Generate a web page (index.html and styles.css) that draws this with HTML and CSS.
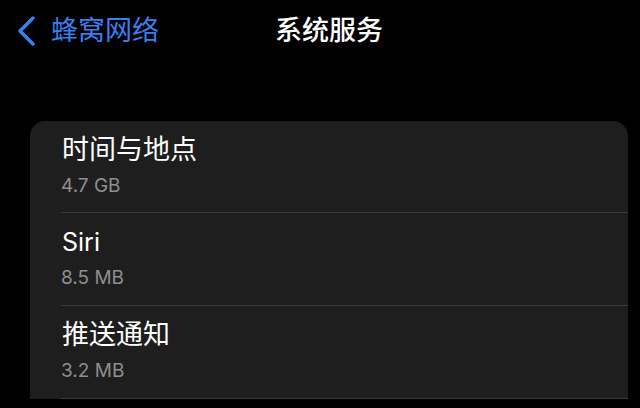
FILE: index.html
```html
<!DOCTYPE html>
<html lang="zh">
<head>
<meta charset="utf-8">
<link rel="stylesheet" href="styles.css">
</head>
<body>
<div class="nav">
  <div class="back">
    <svg class="chev" width="22" height="30" viewBox="0 0 22 30"><path d="M18 2 L5 15 L18 28" fill="none" stroke="#3a7ff0" stroke-width="3.4" stroke-linecap="round" stroke-linejoin="round"/></svg>
    <span class="back-label">蜂窝网络</span>
  </div>
  <div class="title">系统服务</div>
</div>
<div class="card">
  <div class="row"><div class="row-inner"><div class="name cjk">时间与地点</div><div class="size">4.7 GB</div></div></div>
  <div class="row"><div class="row-inner"><div class="name">Siri</div><div class="size">8.5 MB</div></div></div>
  <div class="row"><div class="row-inner"><div class="name cjk">推送通知</div><div class="size">3.2 MB</div></div></div>
</div>
</body>
</html>
```
FILE: styles.css
```css
html, body {
  margin: 0;
  padding: 0;
  background: #000;
  height: 100%;
  overflow: hidden;
}
body {
  font-family: "Inter", "Noto Sans CJK SC", sans-serif;
  color: #fff;
}
.nav {
  position: relative;
  height: 62px;
  display: flex;
  align-items: center;
}
.back {
  display: flex;
  align-items: center;
  padding-left: 15px;
  gap: 14px;
}
.chev { display: block; }
.back-label {
  color: #3a7ff0;
  font-size: 27px;
  line-height: 32px;
}
.title {
  position: absolute;
  left: 275px;
  top: 15px;
  font-size: 27px;
  line-height: 32px;
  font-weight: 500;
}
.card {
  margin: 59px 12px 0 30px;
  background: #1e1e1e;
  border-radius: 15px 15px 0 0;
}
.row {
  padding-left: 31px;
}
.row-inner {
  height: 92px;
  border-bottom: 1px solid #3a3a3c;
  box-sizing: border-box;
  padding-top: 13px;
}
.row + .row .row-inner {
  height: 93px;
}
.name {
  font-size: 25px;
  line-height: 32px;
  padding-left: 1px;
}
.name.cjk {
  font-size: 27px;
}
.size {
  font-size: 19px;
  line-height: 24px;
  color: #8e8e93;
  margin-top: 8px;
}
```
